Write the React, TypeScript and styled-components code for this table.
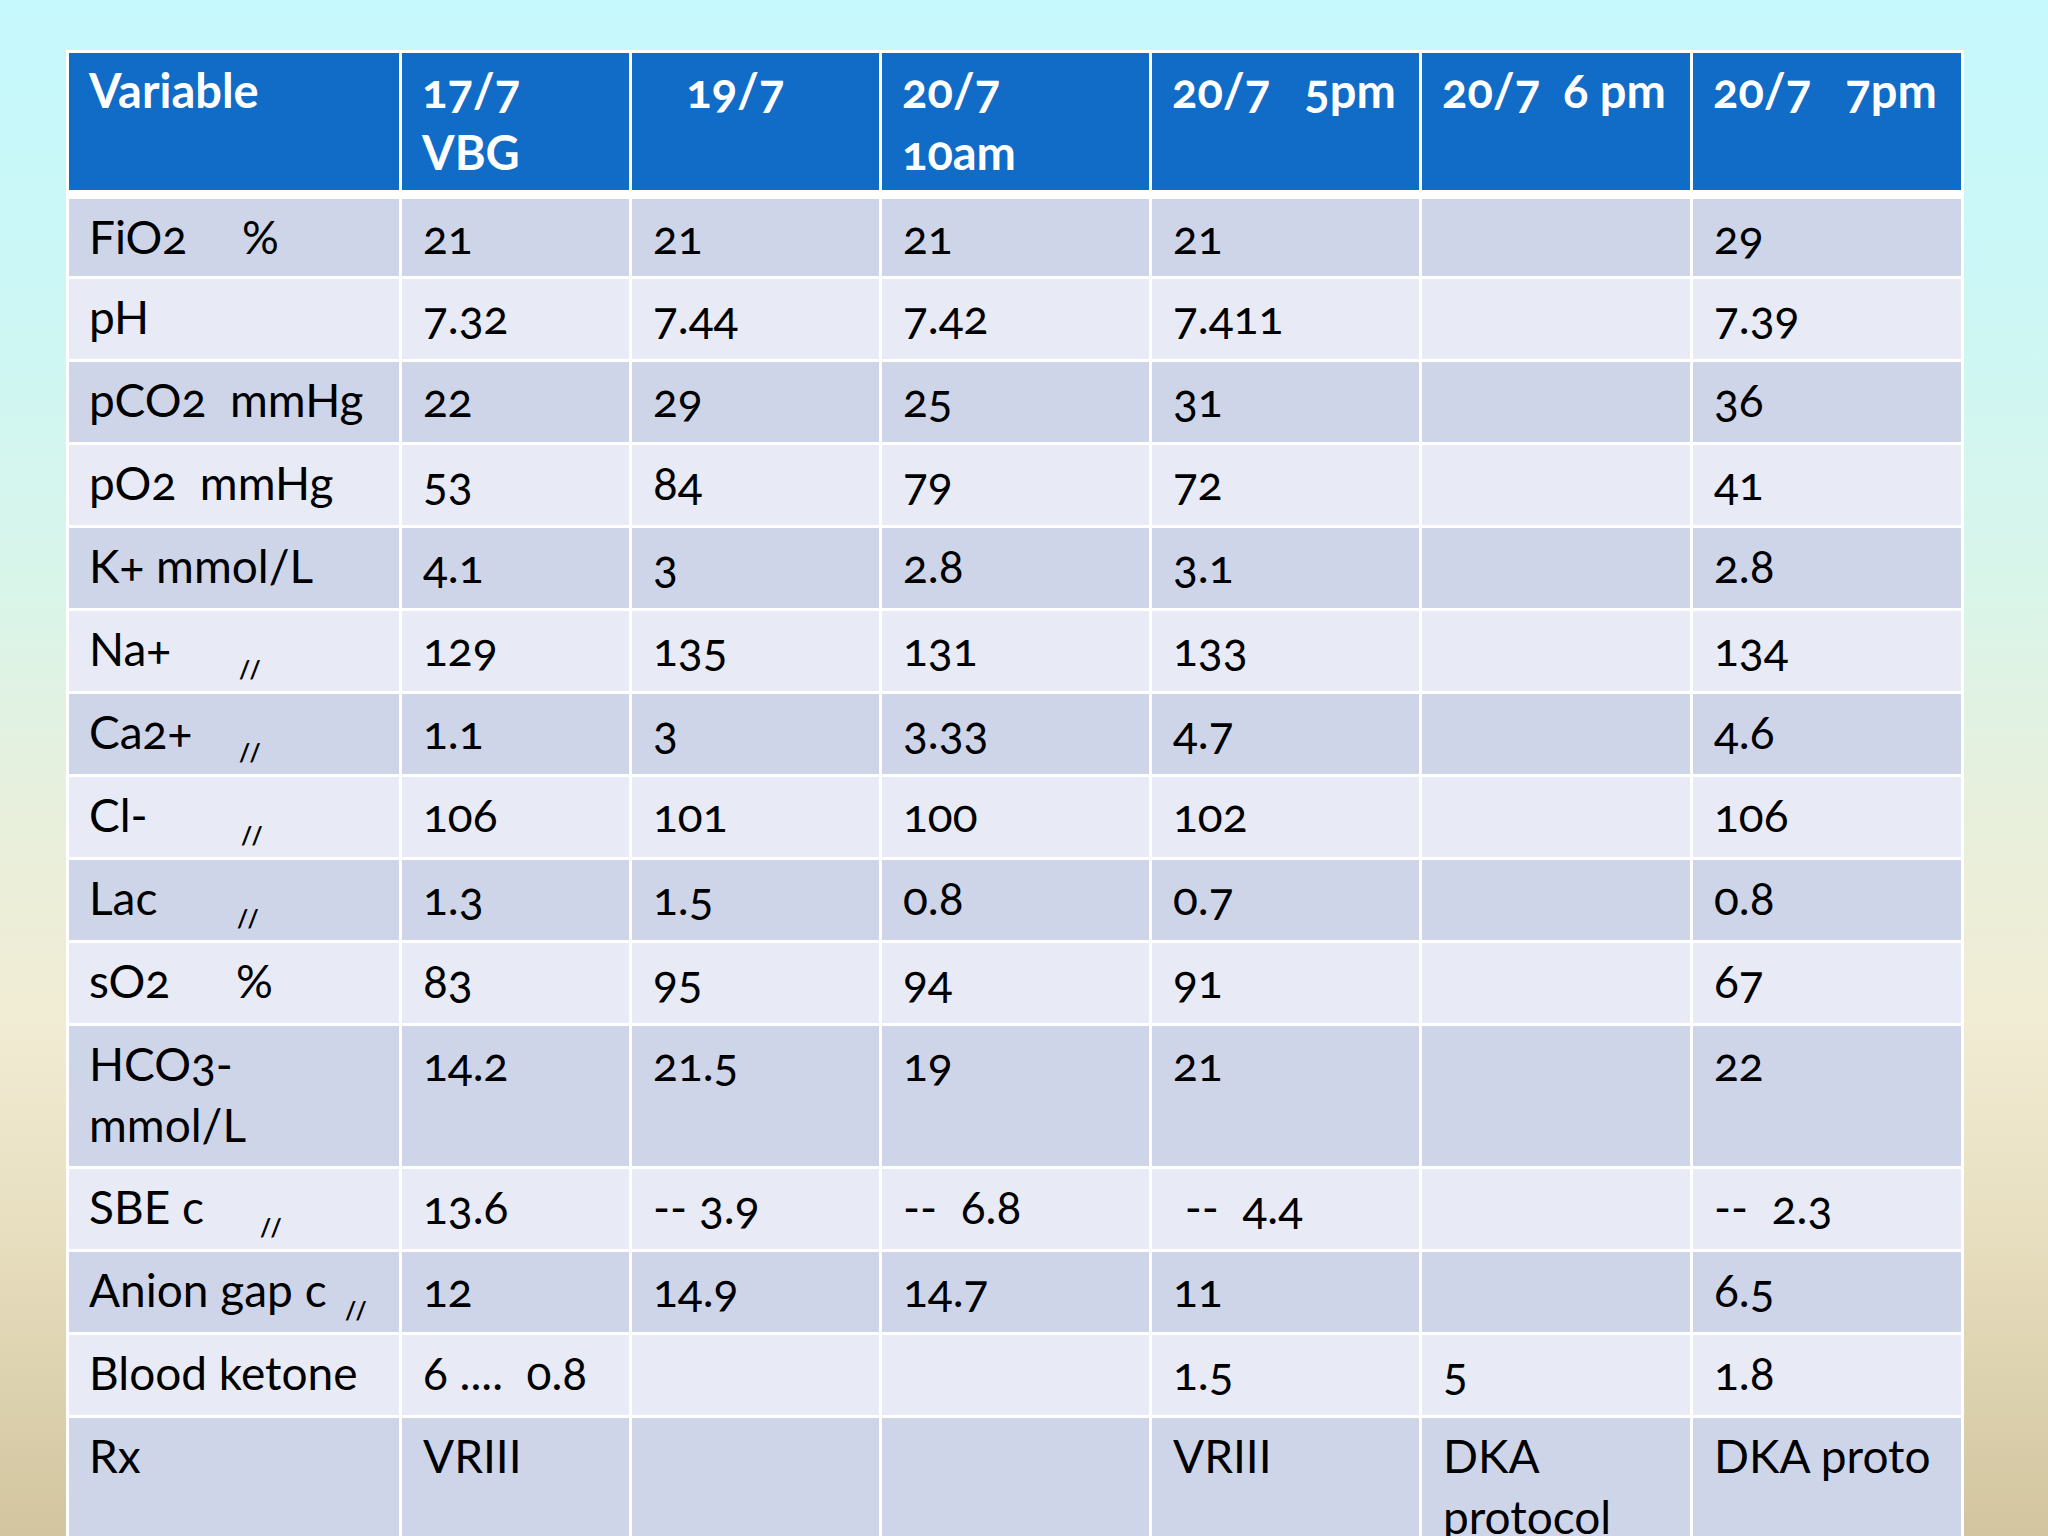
import React from 'react';
import styled, { createGlobalStyle } from 'styled-components';

const GlobalStyle = createGlobalStyle`
  html, body {
    margin: 0;
    padding: 0;
    width: 2048px;
    height: 1536px;
    overflow: hidden;
  }
  body {
    font-family: Lato, "Open Sans", "Noto Sans", sans-serif;
    color: #000;
  }
`;

const Slide = styled.div`
  width: 2048px;
  height: 1536px;
  overflow: hidden;
  box-sizing: border-box;
  padding: 50px 0 0 66px;
  background: linear-gradient(
    180deg,
    #c6f9fd 0%,
    #cbf7f6 18%,
    #d9f5ea 38%,
    #e7f0dd 52%,
    #f1ecd4 66%,
    #e8dfc0 80%,
    #d2c59f 100%
  );
`;

const Table = styled.div`
  width: 1898px;
  box-sizing: border-box;
  padding: 3px;
  background: #ffffff;
  display: flex;
  flex-direction: column;
  gap: 3px;
`;

const Row = styled.div<{ $h: number; $header?: boolean }>`
  display: grid;
  grid-template-columns: 330px 227px 247px 267px 267px 268px 268px;
  column-gap: 3px;
  height: ${(p) => p.$h}px;
  flex: none;
  margin-bottom: ${(p) => (p.$header ? 6 : 0)}px;
`;

const HeadCell = styled.div`
  background: #106cc6;
  color: #ffffff;
  font-weight: 700;
  font-size: 47px;
  line-height: 62px;
  padding: 6px 8px 0 20px;
  white-space: pre-wrap;
  font-variant-numeric: oldstyle-nums;
  overflow: hidden;
`;

const Cell = styled.div<{ $tone: 'dark' | 'light' }>`
  background: ${(p) => (p.$tone === 'dark' ? '#cfd5e9' : '#e8eaf5')};
  font-size: 46px;
  line-height: 61px;
  padding: 7px 6px 0 21px;
  white-space: pre-wrap;
  font-variant-numeric: oldstyle-nums;
  overflow: hidden;
`;

const LabelCell = styled(Cell)`
  padding-left: 20px;
`;

const Name = styled.span<{ $w?: number }>`
  display: inline-block;
  min-width: ${(p) => p.$w ?? 0}px;
`;

const Unit = styled.span`
  display: inline-block;
`;

const Ditto = styled.span`
  display: inline-block;
  font-size: 24px;
  font-weight: 700;
  letter-spacing: 5px;
  vertical-align: -13px;
`;

type DataRow = {
  name: string;
  unit?: string;
  ditto?: boolean;
  unitAt?: number;
  values: string[];
  h: number;
};

const rows: DataRow[] = [
  { name: 'FiO2', unit: '%', unitAt: 153, values: ['21', '21', '21', '21', '', '29'], h: 77 },
  { name: 'pH', values: ['7.32', '7.44', '7.42', '7.411', '', '7.39'], h: 80 },
  { name: 'pCO2  mmHg', values: ['22', '29', '25', '31', '', '36'], h: 80 },
  { name: 'pO2  mmHg', values: ['53', '84', '79', '72', '', '41'], h: 80 },
  { name: 'K+ mmol/L', values: ['4.1', '3', '2.8', '3.1', '', '2.8'], h: 80 },
  { name: 'Na+', ditto: true, unitAt: 150, values: ['129', '135', '131', '133', '', '134'], h: 80 },
  { name: 'Ca2+', ditto: true, unitAt: 150, values: ['1.1', '3', '3.33', '4.7', '', '4.6'], h: 80 },
  { name: 'Cl-', ditto: true, unitAt: 152, values: ['106', '101', '100', '102', '', '106'], h: 80 },
  { name: 'Lac', ditto: true, unitAt: 148, values: ['1.3', '1.5', '0.8', '0.7', '', '0.8'], h: 80 },
  { name: 'sO2', unit: '%', unitAt: 147, values: ['83', '95', '94', '91', '', '67'], h: 80 },
  { name: 'HCO3-\nmmol/L', values: ['14.2', '21.5', '19', '21', '', '22'], h: 140 },
  { name: 'SBE c', ditto: true, unitAt: 171, values: ['13.6', '-- 3.9', '--  6.8', ' --  4.4', '', '--  2.3'], h: 80 },
  { name: 'Anion gap c', ditto: true, unitAt: 256, values: ['12', '14.9', '14.7', '11', '', '6.5'], h: 80 },
  { name: 'Blood ketone', values: ['6 ....  0.8', '', '', '1.5', '5', '1.8'], h: 80 },
  { name: 'Rx', values: ['VRIII', '', '', 'VRIII', 'DKA protocol', 'DKA proto'], h: 140 },
];

const headers = ['Variable', '17/7\nVBG', '   19/7', '20/7\n10am', '20/7   5pm', '20/7  6 pm', '20/7   7pm'];

export default function App() {
  return (
    <>
      <GlobalStyle />
      <Slide>
        <Table>
          <Row $h={137} $header>
            {headers.map((h, i) => (
              <HeadCell key={i}>{h}</HeadCell>
            ))}
          </Row>
          {rows.map((r, ri) => {
            const tone = ri % 2 === 0 ? 'dark' : 'light';
            return (
              <Row key={ri} $h={r.h}>
                <LabelCell $tone={tone}>
                  <Name $w={r.unitAt}>{r.name}</Name>
                  {r.unit && <Unit>{r.unit}</Unit>}
                  {r.ditto && <Ditto>//</Ditto>}
                </LabelCell>
                {r.values.map((v, vi) => (
                  <Cell key={vi} $tone={tone}>
                    {v}
                  </Cell>
                ))}
              </Row>
            );
          })}
        </Table>
      </Slide>
    </>
  );
}
